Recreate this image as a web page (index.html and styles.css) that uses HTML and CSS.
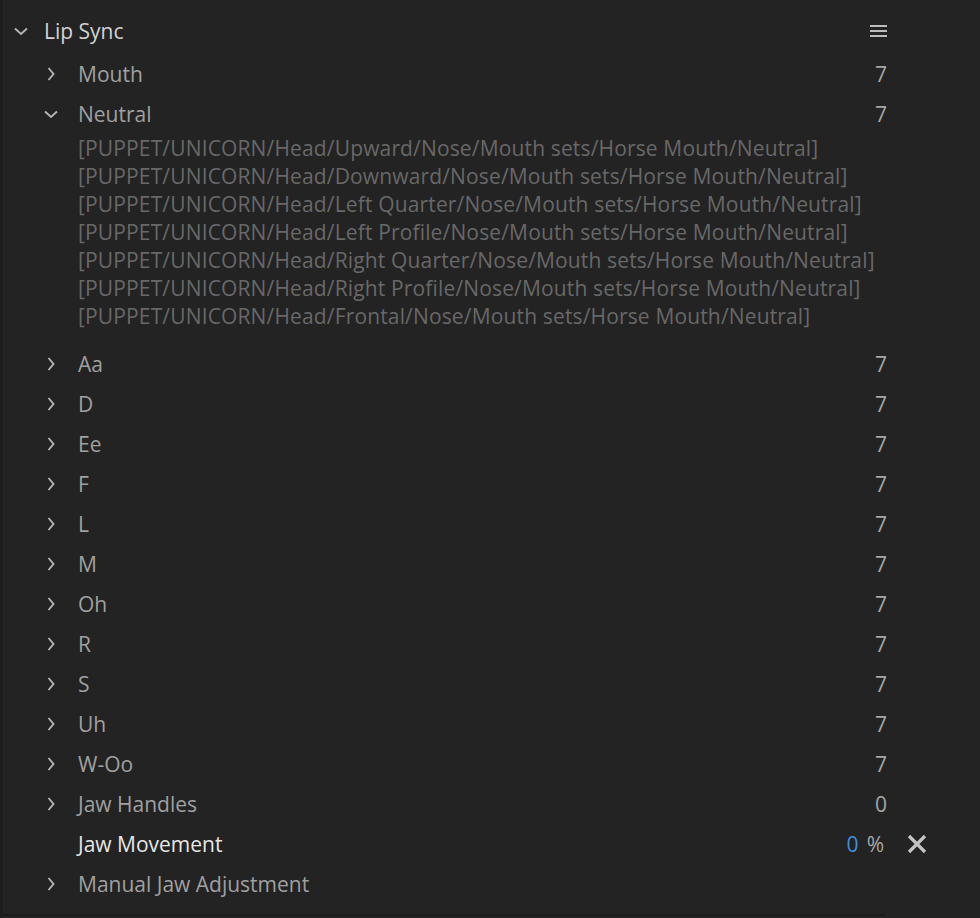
FILE: index.html
```html
<!DOCTYPE html>
<html>
<head>
<meta charset="utf-8">
<link rel="stylesheet" href="styles.css">
</head>
<body>
<div class="panel">
  <div class="row top">
    <span class="chev"><svg width="14" height="14" viewBox="0 0 14 14"><path d="M1 4.5 L7 10 L13 4.5" /></svg></span>
    <span class="label title">Lip Sync</span>
    <span class="menu"><svg width="17" height="14" viewBox="0 0 17 14"><path d="M0 2 H17 M0 7 H17 M0 12 H17" /></svg></span>
    <span class="trail"></span>
  </div>

  <div class="row sub">
    <span class="chev"><svg width="14" height="14" viewBox="0 0 14 14"><path d="M4.5 1 L9.5 7 L4.5 13" /></svg></span>
    <span class="label">Mouth</span><span class="val">7</span><span class="trail"></span>
  </div>
  <div class="row sub">
    <span class="chev"><svg width="14" height="14" viewBox="0 0 14 14"><path d="M1 4.5 L7 10 L13 4.5" /></svg></span>
    <span class="label">Neutral</span><span class="val">7</span><span class="trail"></span>
  </div>
  <div class="paths">
    <div class="path">[PUPPET/UNICORN/Head/Upward/Nose/Mouth sets/Horse Mouth/Neutral]</div>
    <div class="path">[PUPPET/UNICORN/Head/Downward/Nose/Mouth sets/Horse Mouth/Neutral]</div>
    <div class="path">[PUPPET/UNICORN/Head/Left Quarter/Nose/Mouth sets/Horse Mouth/Neutral]</div>
    <div class="path">[PUPPET/UNICORN/Head/Left Profile/Nose/Mouth sets/Horse Mouth/Neutral]</div>
    <div class="path">[PUPPET/UNICORN/Head/Right Quarter/Nose/Mouth sets/Horse Mouth/Neutral]</div>
    <div class="path">[PUPPET/UNICORN/Head/Right Profile/Nose/Mouth sets/Horse Mouth/Neutral]</div>
    <div class="path">[PUPPET/UNICORN/Head/Frontal/Nose/Mouth sets/Horse Mouth/Neutral]</div>
  </div>

  <div class="row sub"><span class="chev"><svg width="14" height="14" viewBox="0 0 14 14"><path d="M4.5 1 L9.5 7 L4.5 13" /></svg></span><span class="label">Aa</span><span class="val">7</span><span class="trail"></span></div>
  <div class="row sub"><span class="chev"><svg width="14" height="14" viewBox="0 0 14 14"><path d="M4.5 1 L9.5 7 L4.5 13" /></svg></span><span class="label">D</span><span class="val">7</span><span class="trail"></span></div>
  <div class="row sub"><span class="chev"><svg width="14" height="14" viewBox="0 0 14 14"><path d="M4.5 1 L9.5 7 L4.5 13" /></svg></span><span class="label">Ee</span><span class="val">7</span><span class="trail"></span></div>
  <div class="row sub"><span class="chev"><svg width="14" height="14" viewBox="0 0 14 14"><path d="M4.5 1 L9.5 7 L4.5 13" /></svg></span><span class="label">F</span><span class="val">7</span><span class="trail"></span></div>
  <div class="row sub"><span class="chev"><svg width="14" height="14" viewBox="0 0 14 14"><path d="M4.5 1 L9.5 7 L4.5 13" /></svg></span><span class="label">L</span><span class="val">7</span><span class="trail"></span></div>
  <div class="row sub"><span class="chev"><svg width="14" height="14" viewBox="0 0 14 14"><path d="M4.5 1 L9.5 7 L4.5 13" /></svg></span><span class="label">M</span><span class="val">7</span><span class="trail"></span></div>
  <div class="row sub"><span class="chev"><svg width="14" height="14" viewBox="0 0 14 14"><path d="M4.5 1 L9.5 7 L4.5 13" /></svg></span><span class="label">Oh</span><span class="val">7</span><span class="trail"></span></div>
  <div class="row sub"><span class="chev"><svg width="14" height="14" viewBox="0 0 14 14"><path d="M4.5 1 L9.5 7 L4.5 13" /></svg></span><span class="label">R</span><span class="val">7</span><span class="trail"></span></div>
  <div class="row sub"><span class="chev"><svg width="14" height="14" viewBox="0 0 14 14"><path d="M4.5 1 L9.5 7 L4.5 13" /></svg></span><span class="label">S</span><span class="val">7</span><span class="trail"></span></div>
  <div class="row sub"><span class="chev"><svg width="14" height="14" viewBox="0 0 14 14"><path d="M4.5 1 L9.5 7 L4.5 13" /></svg></span><span class="label">Uh</span><span class="val">7</span><span class="trail"></span></div>
  <div class="row sub"><span class="chev"><svg width="14" height="14" viewBox="0 0 14 14"><path d="M4.5 1 L9.5 7 L4.5 13" /></svg></span><span class="label">W-Oo</span><span class="val">7</span><span class="trail"></span></div>
  <div class="row sub"><span class="chev"><svg width="14" height="14" viewBox="0 0 14 14"><path d="M4.5 1 L9.5 7 L4.5 13" /></svg></span><span class="label">Jaw Handles</span><span class="val">0</span><span class="trail"></span></div>
  <div class="row sub">
    <span class="chev"></span>
    <span class="label bright">Jaw Movement</span>
    <span class="val"><span class="num">0</span><span class="unit">%</span></span>
    <span class="trail"><svg class="close" width="20" height="20" viewBox="0 0 20 20"><path d="M2 2 L18 18 M18 2 L2 18" /></svg></span>
  </div>
  <div class="row sub"><span class="chev"><svg width="14" height="14" viewBox="0 0 14 14"><path d="M4.5 1 L9.5 7 L4.5 13" /></svg></span><span class="label">Manual Jaw Adjustment</span><span class="trail"></span></div>
  <div class="bottom"></div>
</div>
</body>
</html>
```

FILE: styles.css
```css
html, body {
  margin: 0;
  padding: 0;
  background: #232323;
}
body {
  font-family: "Open Sans", "Noto Sans", sans-serif;
  font-size: 21px;
  color: #a0a0a0;
}
.panel {
  box-sizing: border-box;
  width: 980px;
  height: 918px;
  border-left: 3px solid #1d1d1d;
  padding-top: 7px;
  background: #232323;
}
.row {
  display: flex;
  align-items: center;
  height: 40px;
}
.row.top {
  height: 47px;
  padding-left: 11px;
}
.row.sub {
  padding-left: 41px;
}
.chev {
  width: 34px;
  flex: none;
  display: flex;
  align-items: center;
}
.row.top .chev {
  width: 30px;
}
.chev svg path,
.menu svg path {
  fill: none;
  stroke: #b4b4b4;
  stroke-width: 1.9;
}
.label {
  flex: 1;
  white-space: nowrap;
}
.title {
  color: #d2d2d2;
}
.bright {
  color: #e6e6e6;
  font-weight: 500;
}
.menu {
  display: flex;
  align-items: center;
}
.menu svg path {
  stroke: #bdbdbd;
  stroke-width: 2;
}
.val {
  color: #a6a6a6;
  display: flex;
  align-items: center;
}
.num {
  color: #3f8fdc;
  margin-right: 8px;
}
.unit {
  color: #a6a6a6;
  margin-right: 3px;
}
.trail {
  width: 93px;
  flex: none;
  display: flex;
  align-items: center;
}
.close {
  margin-left: 20px;
}
.close path {
  stroke: #c4c4c4;
  stroke-width: 3.2;
  fill: none;
}
.paths {
  padding-left: 75px;
  padding-bottom: 14px;
}
.path {
  height: 28px;
  line-height: 28px;
  color: #686868;
  white-space: nowrap;
  letter-spacing: 0.15px;
}
.bottom {
  margin-top: 10px;
  height: 2px;
  width: 882px;
  background: #1b1b1b;
}
```
